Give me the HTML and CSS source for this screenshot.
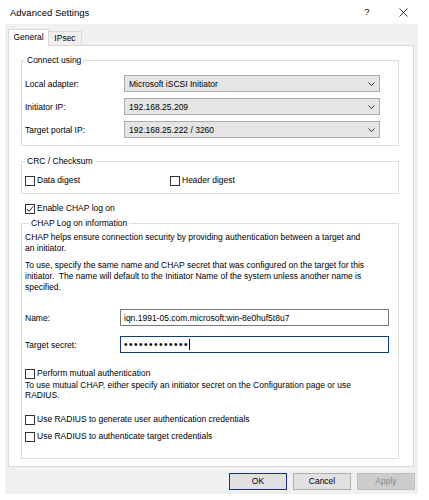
FILE: index.html
```html
<!DOCTYPE html>
<html>
<head>
<meta charset="utf-8">
<link rel="stylesheet" href="styles.css">
</head>
<body>
<div class="titlebar">
  <span class="title">Advanced Settings</span>
  <span class="help">?</span>
  <span class="close"><svg width="9" height="9" viewBox="0 0 9 9"><path d="M0.5 0.5 L8.5 8.5 M8.5 0.5 L0.5 8.5" stroke="#222" stroke-width="0.9" fill="none"/></svg></span>
</div>
<div class="dialog">
  <div class="tabs">
    <div class="tab active">General</div>
    <div class="tab">IPsec</div>
  </div>
  <div class="panel">
    <fieldset class="group connect">
      <legend>Connect using</legend>
      <div class="row"><span class="lbl">Local adapter:</span><div class="combo"><span>Microsoft iSCSI Initiator</span><svg width="7" height="4" viewBox="0 0 7 4"><path d="M0.5 0.5 L3.5 3.5 L6.5 0.5" stroke="#333" stroke-width="1" fill="none"/></svg></div></div>
      <div class="row"><span class="lbl">Initiator IP:</span><div class="combo"><span>192.168.25.209</span><svg width="7" height="4" viewBox="0 0 7 4"><path d="M0.5 0.5 L3.5 3.5 L6.5 0.5" stroke="#333" stroke-width="1" fill="none"/></svg></div></div>
      <div class="row"><span class="lbl">Target portal IP:</span><div class="combo"><span>192.168.25.222 / 3260</span><svg width="7" height="4" viewBox="0 0 7 4"><path d="M0.5 0.5 L3.5 3.5 L6.5 0.5" stroke="#333" stroke-width="1" fill="none"/></svg></div></div>
    </fieldset>
    <fieldset class="group crc">
      <legend>CRC / Checksum</legend>
      <div class="checks">
        <div class="check first"><span class="box"></span>Data digest</div>
        <div class="check"><span class="box"></span>Header digest</div>
      </div>
    </fieldset>
    <div class="check enable"><span class="box"><svg width="8" height="8" viewBox="0 0 8 8"><path d="M0.8 4 L3 6.3 L7.2 1.3" stroke="#222" stroke-width="1" fill="none"/></svg></span>Enable CHAP log on</div>
    <fieldset class="group chap">
      <legend>CHAP Log on information</legend>
      <p>CHAP helps ensure connection security by providing authentication between a target and<br>an initiator.</p>
      <p class="p2">To use, specify the same name and CHAP secret that was configured on the target for this<br>initiator.&nbsp; The name will default to the Initiator Name of the system unless another name is<br>specified.</p>
      <div class="field first"><span class="flbl">Name:</span><div class="input">iqn.1991-05.com.microsoft:win-8e0huf5t8u7</div></div>
      <div class="field"><span class="flbl">Target secret:</span><div class="input focus"><span class="dots">•••••••••••••</span><span class="caret"></span></div></div>
      <div class="check mutual"><span class="box"></span>Perform mutual authentication</div>
      <p class="pm">To use mutual CHAP, either specify an initiator secret on the Configuration page or use<br>RADIUS.</p>
      <div class="check r1"><span class="box"></span>Use RADIUS to generate user authentication credentials</div>
      <div class="check r2"><span class="box"></span>Use RADIUS to authenticate target credentials</div>
    </fieldset>
  </div>
  <div class="buttons">
    <div class="btn ok">OK</div>
    <div class="btn">Cancel</div>
    <div class="btn disabled">Apply</div>
  </div>
</div>
</body>
</html>
```
FILE: styles.css
```css
* { box-sizing: border-box; }
html, body { margin: 0; padding: 0; background: #fff; }
body {
  font-family: "Liberation Sans", Arial, sans-serif;
  font-size: 8.5px;
  color: #000;
  width: 429px;
  height: 500px;
  overflow: hidden;
}
.titlebar {
  height: 24px;
  display: flex;
  align-items: center;
  padding-left: 10px;
}
.title { flex: 1; font-size: 9.5px; }
.help { width: 10px; text-align: center; font-size: 9.5px; margin-right: 26px; margin-top: -1px; }
.close { width: 10px; height: 10px; display: flex; align-items: center; justify-content: center; margin-right: 21px; }

.dialog {
  margin-left: 5px;
  width: 413px;
  height: 470px;
  background: #f0f0f0;
  padding: 5px 3px 0 3px;
}
.tabs {
  display: flex;
  align-items: flex-end;
  height: 16px;
}
.tab {
  height: 14px;
  width: 34px;
  border: 1px solid #d9d9d9;
  border-bottom: none;
  background: #f0f0f0;
  text-align: center;
  line-height: 13px;
  margin-left: -1px;
}
.tab.active {
  position: relative;
  z-index: 1;
  width: 41px;
  height: 17px;
  margin-left: 0;
  margin-bottom: -1px;
  background: #fff;
  line-height: 15px;
}
.panel {
  width: 406px;
  height: 422px;
  background: #fff;
  border: 1px solid #d9d9d9;
  overflow: hidden;
}
.group {
  border: 1px solid #dcdcdc;
  margin: 0 14px 0 12px;
  min-width: 0;
}
.group legend {
  padding: 0 2px;
  line-height: 11px;
  height: 11px;
}
.connect { margin-top: 9px; padding: 9px 18px 7px 3px; }
.row { display: flex; align-items: center; height: 17px; }
.row + .row { margin-top: 6px; }
.lbl { width: 99px; }
.combo {
  flex: 1;
  height: 17px;
  border: 1px solid #adadad;
  background: #e5e5e5;
  display: flex;
  align-items: center;
  justify-content: space-between;
  padding: 0 4px 0 4px;
}
.combo svg { display: block; }

.crc { margin-top: 10px; padding: 8px 3px 7px 3px; }
.checks { display: flex; }
.check { display: flex; align-items: center; height: 11px; line-height: 11px; }
.check.first { width: 145px; }
.box {
  width: 10px;
  height: 10px;
  border: 1px solid #333;
  background: #fff;
  margin-right: 2px;
  display: flex;
  align-items: center;
  justify-content: center;
}
.box svg { display: block; }
.enable { margin: 9px 0 0 16px; }

.chap { margin-top: 4px; padding: 3px 9px 16px 3px; }
.chap legend { margin-left: 4px; }
.chap p { margin: 0; line-height: 11px; white-space: nowrap; }
.chap p.p2 { margin-top: 6px; }
.field { display: flex; align-items: center; height: 17px; }
.field.first { margin-top: 16px; }
.field + .field { margin-top: 10px; }
.flbl { width: 95px; }
.input {
  flex: 1;
  height: 17px;
  border: 1px solid #7a7a7a;
  background: #fff;
  padding-left: 3px;
  display: flex;
  align-items: center;
}
.input.focus { border-color: #0c3c8e; }
.dots { font-size: 10px; letter-spacing: 1.5px; }
.caret { width: 1px; height: 11px; background: #000; margin-left: 0px; }
.mutual { margin-top: 15px; }
.chap p.pm { margin-top: 1px; line-height: 10px; }
.r1 { margin-top: 14px; }
.r2 { margin-top: 6px; }

.buttons {
  display: flex;
  justify-content: flex-end;
  margin-top: 6px;
}
.btn {
  width: 58px;
  height: 17px;
  border: 1px solid #adadad;
  background: #e1e1e1;
  text-align: center;
  line-height: 15px;
  margin-left: 6px;
}
.btn.ok { border-color: #13318a; }
.btn.disabled { background: #cccccc; border-color: #bfbfbf; color: #8a8a8a; }
```
